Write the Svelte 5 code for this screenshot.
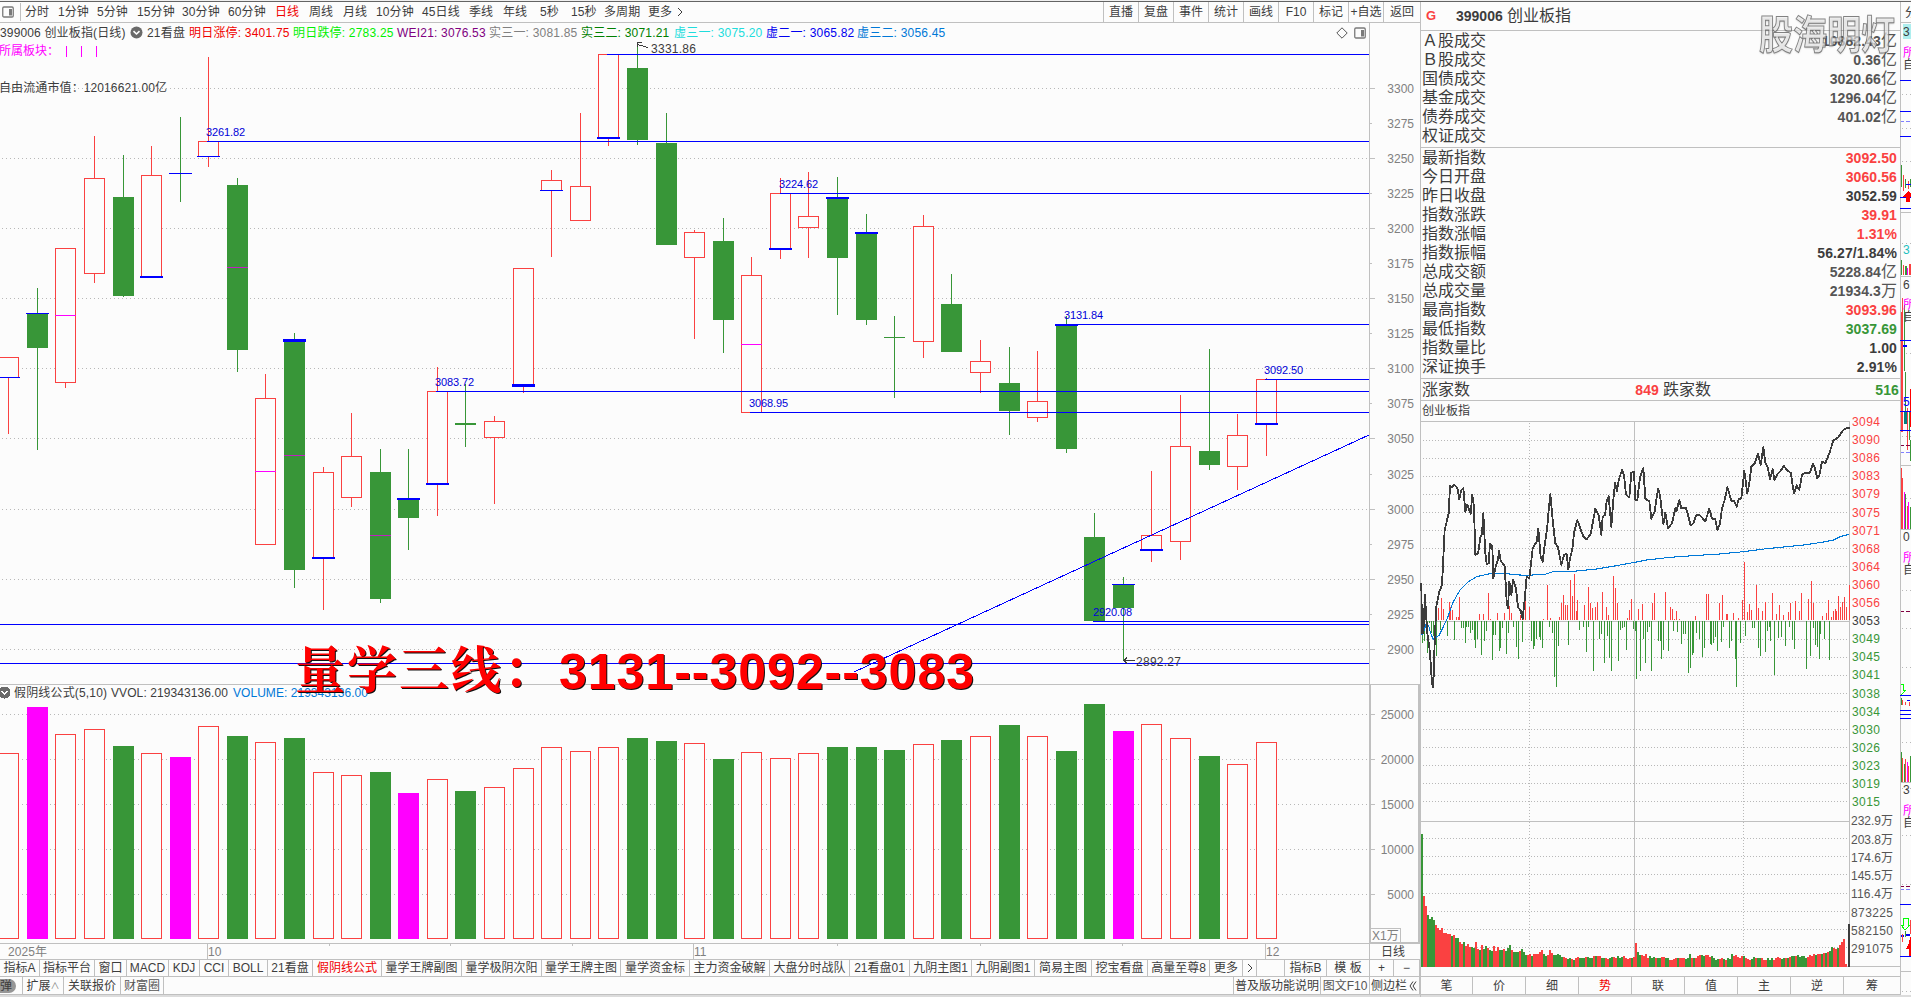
<script>
  const periods = [
    ["分时", 33], ["1分钟", 39], ["5分钟", 40], ["15分钟", 45], ["30分钟", 46], ["60分钟", 47],
    ["日线", 34], ["周线", 34], ["月线", 33], ["10分钟", 46], ["45日线", 47], ["季线", 34],
    ["年线", 37], ["5秒", 31], ["15秒", 33], ["多周期", 44], ["更多", 29]
  ];

  const actions = ["直播", "复盘", "事件", "统计", "画线", "F10", "标记", "+自选", "返回"];

  const indicators = [
    ["明日涨停: 3401.75", "#f00000", 104],
    ["明日跌停: 2783.25", "#00f000", 104],
    ["WEI21: 3076.53", "#800080", 92],
    ["实三一: 3081.85", "#808080", 92],
    ["实三二: 3071.21", "#008000", 93],
    ["虚三一: 3075.20", "#20dcdc", 92],
    ["虚二一: 3065.82", "#0000f0", 91],
    ["虚三二: 3056.45", "#0078d7", 92]
  ];

  // kind, high, top, bottom, low, volume top, mark y, mark height, magenta y
  const rawCandles = [
    ["r", 357, 357, 377, 434, 753, 377, 1],
    ["g", 288, 313, 348, 450, 707, 313, 1],
    ["r", 248, 248, 382, 388, 734, 0, 0, 315],
    ["r", 136, 178, 273, 283, 729],
    ["g", 155, 197, 296, 297, 746],
    ["r", 146, 175, 277, 277, 753, 276, 2],
    ["g", 117, 173, 174, 202, 757, 173, 1],
    ["r", 57, 141, 156, 167, 726, 156, 1],
    ["g", 178, 185, 350, 372, 736, 0, 0, 267],
    ["r", 374, 398, 544, 544, 742, 0, 0, 471],
    ["g", 333, 341, 570, 588, 738, 339, 3, 455],
    ["r", 467, 472, 558, 610, 772, 557, 2],
    ["r", 413, 456, 497, 507, 775],
    ["g", 449, 472, 599, 603, 772, 0, 0, 535],
    ["g", 449, 499, 518, 550, 793, 498, 2],
    ["r", 367, 391, 484, 516, 779, 483, 2],
    ["g", 384, 423, 425, 447, 791],
    ["r", 416, 421, 437, 504, 787],
    ["r", 268, 268, 385, 393, 768, 384, 3],
    ["r", 170, 180, 190, 257, 747, 190, 1],
    ["r", 113, 186, 220, 220, 751],
    ["r", 54, 54, 138, 146, 747, 137, 2],
    ["g", 43, 68, 140, 145, 738],
    ["g", 113, 143, 245, 245, 741],
    ["r", 230, 232, 257, 339, 743],
    ["g", 218, 241, 320, 353, 759],
    ["r", 257, 275, 412, 412, 752, 0, 0, 344],
    ["r", 178, 193, 249, 259, 758, 248, 2],
    ["r", 172, 216, 227, 258, 753],
    ["g", 177, 198, 258, 315, 747, 197, 2],
    ["g", 214, 233, 320, 325, 747, 232, 2],
    ["g", 316, 337, 338, 398, 750],
    ["r", 215, 226, 341, 358, 744],
    ["g", 274, 304, 352, 352, 740],
    ["r", 340, 361, 372, 393, 736],
    ["g", 347, 383, 411, 435, 725],
    ["r", 351, 401, 417, 422, 736],
    ["g", 316, 325, 449, 453, 751, 324, 2],
    ["g", 513, 537, 621, 621, 704],
    ["g", 577, 584, 608, 661, 731, 584, 1],
    ["r", 471, 535, 550, 562, 724, 549, 2],
    ["r", 395, 446, 541, 560, 738],
    ["g", 349, 451, 465, 470, 756],
    ["r", 414, 435, 466, 490, 764],
    ["r", 378, 379, 424, 456, 742, 423, 2]
  ];
  const magentaVolumes = [1, 6, 14, 39];

  const candles = rawCandles.map(([kind, high, top, bottom, low, vol, markY, markH, mid], i) => ({
    kind, high, top, bottom, low, vol, markY, markH, mid,
    x: Math.round(8.2 + 28.58 * i),
    volKind: magentaVolumes.includes(i) ? "m" : kind
  }));

  const levels = [
    [607, 54], [207, 141], [780, 193], [1066, 324], [1265, 379],
    [436, 391], [750, 412], [1093, 621], [0, 624], [0, 663]
  ];
  const levelLabels = [
    [206, 136, "3261.82"], [779, 188, "3224.62"], [1064, 319, "3131.84"], [1264, 374, "3092.50"],
    [435, 386, "3083.72"], [749, 407, "3068.95"], [1093, 616, "2920.08"]
  ];
  const priceTicks = [88, 123, 158, 193, 228, 263, 298, 333, 368, 403, 438, 474, 509, 544, 579, 614, 649]
    .map((y, i) => ({ y, value: 3300 - i * 25, major: i % 2 === 0 }));
  const volumeTicks = [25000, 20000, 15000, 10000, 5000].map((value, i) => ({ value, y: 714 + i * 45 }));

  const tabs = [
    ["指标A", 40], ["指标平台", 55], ["窗口", 32], ["MACD", 42], ["KDJ", 31], ["CCI", 29], ["BOLL", 39],
    ["21看盘", 45], ["假阴线公式", 69], ["量学王牌副图", 80], ["量学极阴次阳", 80], ["量学王牌主图", 79],
    ["量学资金标", 69], ["主力资金破解", 80], ["大盘分时战队", 80], ["21看盘01", 60], ["九阴主图1", 62],
    ["九阴副图1", 63], ["简易主图", 57], ["挖宝看盘", 56], ["高量至尊8", 62], ["更多", 33], ["next", 14],
    ["", 28], ["指标B", 42], ["模 板", 43], ["+", 24], ["−", 26]
  ];

  const turnover = [
    ["Ａ股成交", "10882.43", "亿"], ["Ｂ股成交", "0.36", "亿"], ["国债成交", "3020.66", "亿"],
    ["基金成交", "1296.04", "亿"], ["债券成交", "401.02", "亿"], ["权证成交", "", ""]
  ];
  const quotes = [
    ["最新指数", "3092.50", "", "up"], ["今日开盘", "3060.56", "", "up"], ["昨日收盘", "3052.59", "", ""],
    ["指数涨跌", "39.91", "", "up"], ["指数涨幅", "1.31%", "", "up"], ["指数振幅", "56.27/1.84%", "", ""],
    ["总成交额", "5228.84", "亿", "soft"], ["总成交量", "21934.3", "万", "soft"], ["最高指数", "3093.96", "", "up"],
    ["最低指数", "3037.69", "", "down"], ["指数量比", "1.00", "", ""], ["深证换手", "2.91%", "", ""]
  ];

  const minuteLabels = [
    3094, 3090, 3086, 3083, 3079, 3075, 3071, 3068, 3064, 3060, 3056, 3053,
    3049, 3045, 3041, 3038, 3034, 3030, 3026, 3023, 3019, 3015
  ];
  const minuteVolLabels = ["232.9万", "203.8万", "174.6万", "145.5万", "116.4万", "873225", "582150", "291075"];
  const sideTabs = ["笔", "价", "细", "势", "联", "值", "主", "逆", "筹"];

  // minute data is kept at three units per pixel
  const pricePath = "34,548 36,700 40,700 45,585 48,640 52,700 58,740 62,790 66,850 70,862 72,790 75,700 79,620 88,575 96,555 104,390 116,340 120,258 126,262 132,254 142,264 148,298 154,270 160,264 166,336 172,314 182,342 187,284 192,322 196,465 204,460 208,435 212,408 216,402 220,340 226,460 230,492 236,490 240,430 247,440 250,535 257,500 264,480 267,452 272,482 284,498 290,605 294,625 298,545 304,585 309,540 318,565 324,622 332,632 338,656 344,600 350,530 358,535 362,500 368,445 380,425 385,386 392,470 398,485 402,450 412,380 416,330 421,282 428,360 436,430 444,442 454,495 462,465 470,462 475,508 480,475 487,448 492,400 502,360 510,382 520,410 530,418 542,402 548,370 556,326 566,345 574,405 578,350 585,345 590,305 596,288 604,380 610,300 615,248 621,275 626,240 636,210 642,225 648,284 658,292 664,218 672,216 676,300 682,300 690,232 700,204 706,296 718,304 724,356 734,335 744,266 750,285 760,372 766,338 774,386 786,370 796,325 800,332 808,300 814,325 828,324 834,345 842,376 850,370 858,346 870,346 886,364 898,326 906,356 916,358 922,390 930,372 936,325 944,300 952,262 964,302 972,302 980,320 986,298 994,295 1003,212 1012,280 1018,250 1024,200 1034,190 1044,160 1052,195 1060,142 1066,188 1074,205 1080,238 1088,208 1093,240 1102,222 1112,212 1122,198 1132,212 1142,218 1152,280 1160,256 1168,270 1176,224 1184,220 1200,218 1209,192 1214,202 1222,235 1228,226 1236,185 1246,190 1258,160 1270,122 1285,112 1300,90 1310,84 1320,84";
  const averagePath = "34,705 40,700 48,672 56,678 62,700 70,718 88,705 100,680 112,655 130,605 150,570 175,545 200,530 235,522 285,520 310,524 350,526 405,523 430,515 490,514 560,507 620,497 680,486 710,480 780,472 850,467 930,462 1000,455 1070,446 1130,440 1190,434 1240,426 1270,420 1290,410 1318,403";

  const buys = [
    45,645, 85,625, 94,595, 99,628, 118,605, 122,620, 127,630, 139,652, 145,652, 148,592, 208,642, 220,642,
    235,580, 241,656, 262,640, 283,640, 298,618, 304,640, 331,645, 340,615, 345,602, 358,620, 400,656, 412,556,
    421,655, 448,650, 454,610, 460,585, 466,615, 472,615, 481,540, 487,588, 493,522, 499,632, 502,600, 523,616,
    535,562, 541,610, 547,625, 556,620, 562,605, 577,576, 589,620, 595,645, 610,528, 616,565, 622,610, 652,654,
    658,630, 664,598, 685,628, 697,612, 727,610, 733,580, 766,575, 781,620, 787,628, 793,656, 799,632, 808,656,
    856,648, 889,582, 895,582, 928,608, 937,586, 949,642, 952,642, 970,640, 985,654, 997,600, 1003,486, 1012,635,
    1018,612, 1024,630, 1039,555, 1045,625, 1057,632, 1066,605, 1087,580, 1099,642, 1108,614, 1120,645, 1135,635,
    1141,608, 1156,602, 1168,632, 1174,580, 1195,598, 1204,544, 1210,608, 1237,648, 1249,640, 1255,600, 1264,652,
    1270,632, 1276,628, 1279,634, 1285,588, 1291,620, 1297,605, 1303,592, 1309,620, 1317,555
  ];
  const sells = [
    37,728, 43,722, 52,758, 58,670, 64,700, 70,708, 79,768, 91,690, 112,707, 133,720, 154,685, 160,685, 166,728,
    169,680, 175,682, 181,698, 187,690, 193,720, 196,745, 202,718, 214,764, 223,722, 229,692, 247,780, 250,705,
    256,704, 268,752, 271,745, 277,685, 289,762, 295,700, 310,682, 319,740, 325,778, 337,725, 364,722, 370,748,
    373,738, 379,718, 388,712, 391,720, 397,745, 418,680, 427,700, 433,830, 439,860, 445,738, 475,735, 508,690,
    520,680, 529,755, 535,682, 550,812, 568,718, 574,702, 583,788, 592,708, 598,774, 604,812, 625,782, 631,690,
    637,685, 643,680, 649,750, 670,688, 676,692, 679,838, 691,812, 700,718, 706,788, 712,695, 718,680, 724,812,
    745,724, 751,722, 754,776, 760,750, 775,752, 790,694, 802,696, 814,732, 820,702, 826,702, 835,820, 841,804,
    847,766, 850,758, 859,700, 868,718, 877,772, 883,744, 901,732, 904,736, 910,730, 916,712, 922,752, 934,726,
    940,680, 958,745, 964,724, 976,778, 979,860, 991,728, 1006,708, 1027,684, 1033,684, 1045,744, 1051,768,
    1066,755, 1072,692, 1078,682, 1081,724, 1093,824, 1105,715, 1114,710, 1126,738, 1138,680, 1147,720, 1153,748,
    1189,808, 1201,768, 1210,685, 1216,735, 1222,740, 1228,776, 1231,702, 1243,716, 1258,780
  ];
  // bar heights from the open on; colours run in parallel
  const minuteVol = [
    400, 212, 182, 155, 143, 149, 140, 125, 118, 112, 116, 102, 101, 98, 98, 92, 95, 86, 86, 76, 70, 74, 64, 68, 60, 60, 58,
    74, 55, 50, 65, 54, 62, 56, 50, 47, 62, 47, 60, 50, 50, 55, 48, 58, 65, 52, 44, 44, 44, 48, 53, 44, 35, 35, 38, 34, 38,
    38, 38, 44, 50, 38, 32, 35, 50, 42, 35, 36, 40, 36, 30, 30, 28, 24, 27, 24, 22, 26, 30, 26, 27, 27, 30, 30, 28, 28, 33,
    33, 32, 33, 27, 27, 26, 24, 26, 30, 30, 27, 32, 28, 30, 33, 28, 25, 28, 28, 30, 72, 45, 36, 36, 34, 38, 27, 32, 26, 30,
    27, 26, 26, 30, 30, 26, 27, 22, 20, 24, 26, 26, 27, 26, 26, 24, 28, 40, 28, 27, 26, 32, 35, 36, 33, 35, 36, 30, 34, 26,
    22, 24, 24, 26, 24, 22, 26, 24, 38, 32, 35, 30, 28, 34, 32, 26, 24, 22, 25, 30, 27, 27, 26, 26, 22, 20, 26, 22, 27, 22,
    26, 30, 26, 24, 26, 27, 27, 30, 33, 33, 32, 35, 30, 32, 32, 27, 30, 35, 32, 38, 36, 38, 40, 38, 42, 42, 45, 48, 60, 58,
    55, 58, 66, 75, 84, 8
  ];
  const minuteVolKinds =
    "grrgggg" + "rrrrrrrrgrggrrgrrrggrrgrggrgg" + "rrrggrgggrgggrgggrrgrrrrrggrrrgggggrrggrgrrgggrgggrgrrgg" +
    "rrggrrgggrrrrgrrggrrrrgg" + "grggrrggrrrrgrrrgggrgrrrggrrrggggrrgrgggrrrrrgrrrggrggrrrgggrrrrggrgrggrgggggrrrrgrrgrgrggrrgrrrrrrrgrrr";

  function pairs(flat) {
    const out = [];
    for (let i = 0; i < flat.length; i += 2) out.push([flat[i], flat[i + 1]]);
    return out;
  }

  function steps(from, to, step) {
    const out = [];
    for (let v = from; v < to; v += step) out.push(Math.round(v));
    return out;
  }

  const minuteGrid = [...steps(440, 620, 18.04), ...steps(639, 815, 18.04), ...steps(838, 960, 18.2)];

  const stripLevels = [80, 111, 136, 197, 208, 340, 411, 430, 695, 710, 714, 718, 904, 956];
  const stripDots = [94, 128, 161, 243, 353, 436, 498, 590, 628, 667, 742, 788, 835, 884, 991];
  const stripRules = [212, 276, 465, 529, 782, 971];
  const stripBlocks = [
    [0, 165, 1, 22, "g"], [2, 175, 1, 16, "r"], [4, 179, 1, 9, "g"], [7, 181, 1, 8, "r"], [9, 179, 2, 8, "g"], [5, 184, 5, 1, "b"],
    [0, 260, 1, 15, "g"], [2, 265, 1, 10, "r"], [4, 266, 2, 9, "g"], [6, 268, 1, 7, "m"], [8, 264, 2, 11, "r"],
    [1, 298, 1, 84, "r"], [0, 312, 2, 120, "r"], [3, 305, 1, 66, "g"], [2, 345, 4, 2, "b"], [4, 372, 1, 50, "g"],
    [3, 412, 4, 12, "t"], [6, 408, 1, 42, "r"], [8, 412, 1, 28, "g"], [9, 389, 2, 38, "x"], [7, 430, 3, 1, "b"], [9, 440, 1, 21, "g"],
    [0, 468, 1, 61, "r"], [1, 478, 1, 51, "r"], [3, 492, 1, 37, "m"], [4, 494, 1, 35, "g"], [6, 506, 1, 23, "r"], [7, 502, 1, 27, "m"], [9, 507, 2, 22, "g"],
    [0, 698, 1, 7, "g"], [1, 700, 1, 5, "r"], [4, 702, 1, 3, "r"], [6, 700, 3, 1, "b"], [8, 702, 1, 4, "r"], [10, 699, 1, 6, "g"],
    [0, 752, 1, 30, "g"], [1, 758, 1, 24, "r"], [3, 764, 1, 18, "g"], [4, 759, 1, 23, "r"], [6, 762, 1, 20, "m"], [7, 766, 1, 16, "r"], [9, 756, 2, 26, "g"],
    [0, 935, 3, 2, "b"], [1, 934, 1, 8, "r"], [4, 931, 1, 6, "g"], [5, 934, 4, 2, "b"], [9, 920, 2, 14, "r"]
  ];
  const stripText = [
    [2, 36, "3", "#3c3c3c"], [2, 254, "3", "#20c0c0"], [2, 289, "6", "#3c3c3c"], [2, 406, "5", "#0000ff"],
    [2, 541, "0", "#3c3c3c"], [2, 794, "3", "#3c3c3c"],
    [2, 57, "所", "#ff00ff"], [2, 309, "所", "#ff00ff"], [2, 562, "所", "#ff00ff"], [2, 815, "所", "#ff00ff"],
    [2, 69, "自", "#3c3c3c"], [2, 321, "自", "#3c3c3c"], [2, 574, "自", "#3c3c3c"], [2, 827, "自", "#3c3c3c"]
  ];
</script>

{#snippet panelIcon()}
  <svg class="panel-icon" width="12" height="12" viewBox="0 0 12 12">
    <rect x="0.75" y="1" width="10.5" height="10" rx="1.2" fill="none" stroke="#7a7a7a" stroke-width="1.3" />
    <rect x="7" y="3" width="3" height="6.5" fill="#7a7a7a" />
  </svg>
{/snippet}

{#snippet downIcon()}
  <svg class="down-icon" width="13" height="13" viewBox="0 0 13 13">
    <circle cx="6.5" cy="6.5" r="6" fill="#6a6a6a" />
    <path d="M3.5 5.2 6.5 8 9.5 5.2" fill="none" stroke="#fff" stroke-width="1.6" />
  </svg>
{/snippet}

{#snippet chevron()}
  <svg width="6" height="10" viewBox="0 0 6 10"><path d="M1 1 5 5 1 9" fill="none" stroke="#3c3c3c" /></svg>
{/snippet}

<div class="screen">
  <main class="left">
    <nav class="periods">
      <span class="toggle">{@render panelIcon()}</span>
      {#each periods as [label, width]}
        <span class="period" class:active={label === "日线"} style="width: {width}px">{label}</span>
      {/each}
      {@render chevron()}
      <div class="actions">
        {#each actions as label}
          <span class="action">{label}</span>
        {/each}
      </div>
    </nav>

    <div class="info">
      <span class="symbol">399006 创业板指(日线)</span>
      <span class="fold">{@render downIcon()}</span>
      <span class="formula">21看盘</span>
      {#each indicators as [text, color, width]}
        <span class="indicator" style="width: {width}px; color: {color}">{text}</span>
      {/each}
      <span class="info-icons">
        <svg width="12" height="12" viewBox="0 0 12 12"><path d="M6 0.8 11.2 6 6 11.2 0.8 6Z" fill="none" stroke="#555" /></svg>
        {@render panelIcon()}
      </span>
    </div>

    <svg class="chart" width="1420" height="918" viewBox="0 42 1420 918">
      <!-- grid and axes -->
      {#each priceTicks as t}
        {#if t.major}
          <line x1="2" x2="1369" y1={t.y + 0.5} y2={t.y + 0.5} class="dots" />
        {/if}
        <rect x="1370" y={t.y} width={t.major ? 5 : 2} height="1" class="rule" />
        <text x="1414" y={t.y + 5} class="axis">{t.value}</text>
      {/each}
      {#each volumeTicks as t}
        <line x1="2" x2="1369" y1={t.y + 0.5} y2={t.y + 0.5} class="dots" />
        <rect x="1370" y={t.y} width="5" height="1" class="rule" />
        <text x="1414" y={t.y + 5} class="axis">{t.value}</text>
      {/each}
      <rect x="1369" y="42" width="1" height="918" class="rule" />
      <rect x="0" y="684" width="1420" height="1" class="rule" />
      <rect x="0" y="943" width="1420" height="1" class="rule" />
      <rect x="1369" y="684" width="2" height="260" class="rule" />
      <rect x="1418" y="684" width="2" height="260" class="rule" />
      <rect x="1370" y="942" width="50" height="2" class="rule" />
      <path d="M1371 928.5h29.5v14" class="box" />
      <text x="1372" y="940" class="muted">X1万</text>
      <text x="1381" y="956">日线</text>

      <text x="-1" y="55" fill="#ff00ff">所属板块：</text>
      {#each [66, 81, 96] as x}
        <rect {x} y="46" width="1" height="11" fill="#ff00ff" />
      {/each}
      <text x="-1" y="92" textLength="168">自由流通市值：12016621.00亿</text>

      <!-- candles -->
      {#each candles as c}
        {#if c.kind === "r"}
          <rect x={c.x} y={c.high} width="1" height={c.top - c.high} class="r" />
          <rect x={c.x} y={c.bottom} width="1" height={c.low - c.bottom} class="r" />
          <rect x={c.x - 9.5} y={c.top + 0.5} width="20" height={c.bottom - c.top} class="hollow" />
        {:else}
          <rect x={c.x} y={c.high} width="1" height={c.low - c.high} class="g" />
          <rect x={c.x - 10} y={c.top} width="21" height={c.bottom - c.top} class="g" />
        {/if}
        {#if c.mid}
          <rect x={c.x - 10} y={c.mid} width="21" height="1" class="m" class:dim={c.kind === "g"} />
        {/if}
        {#if c.markH}
          <rect x={c.x - 11} y={c.markY} width="23" height={c.markH} class="b" />
        {/if}

        {#if c.volKind === "r"}
          <rect x={c.x - 9.5} y={c.vol + 0.5} width="20" height={938 - c.vol} class="hollow" />
        {:else}
          <rect x={c.x - 10} y={c.vol} width="21" height={939 - c.vol} class={c.volKind} />
        {/if}
      {/each}

      <!-- price levels and trend line -->
      {#each levels as [x, y]}
        <rect {x} {y} width={1369 - x} height="1" class="b" />
      {/each}
      {#each levelLabels as [x, y, text]}
        <text {x} {y} class="level" textLength="39">{text}</text>
      {/each}
      <line x1="854" y1="672" x2="1369" y2="435" class="trend" />
      <path d="M648 47.5 637.5 44.5M637.5 42.5h4M637.5 42v5" class="pointer" />
      <text x="651" y="53" textLength="45">3331.86</text>
      <path d="M1135 660.5h-11M1127 657.5l-3 3 3 3" class="pointer" />
      <text x="1136" y="666" textLength="45">2892.27</text>

      <!-- volume header -->
      <g transform="translate(-2 686)">{@render downIcon()}</g>
      <text x="14" y="697" textLength="93">假阴线公式(5,10)</text>
      <text x="111" y="697" textLength="117">VVOL: 219343136.00</text>
      <text x="233" y="697" textLength="135" fill="#0078d7">VOLUME: 219343136.00</text>

      <!-- dates -->
      {#each [[207, "10"], [693, "11"], [1265, "12"]] as [x, text]}
        <rect {x} y="943" width="1" height="16" class="rule" />
        <text x={x + 1} y="956" class="muted">{text}</text>
      {/each}
      {#each [329, 450, 572, 837, 980, 1122] as x}
        <rect {x} y="943" width="1" height="3" class="rule" />
      {/each}
      <text x="8" y="956" class="muted" textLength="39">2025年</text>

      <g class="headline">
        <text x="295" y="688" class="headline-cjk" textLength="258">量学三线：</text>
        <text x="559" y="689" class="headline-num" textLength="415">3131--3092--3083</text>
      </g>
    </svg>

    <div class="tabs">
      {#each tabs as [label, width]}
        <span class="tab" class:active={label === "假阴线公式"} style="width: {width}px">
          {#if label === "next"}{@render chevron()}{:else}{label}{/if}
        </span>
      {/each}
    </div>
    <div class="tabs status">
      <span class="tab bullet"><i>弹</i></span>
      <span class="tab extend">扩展<small>∧</small></span>
      <span class="tab related">关联报价</span>
      <span class="tab circle">财富圈</span>
      <span class="tab spacer"></span>
      <span class="tab notes">普及版功能说明</span>
      <span class="tab f10">图文F10</span>
      <span class="tab sidebar">侧边栏<svg width="8" height="10" viewBox="0 0 8 10"><path d="M4 0.5 1 5 4 9.5M7 0.5 4 5 7 9.5" fill="none" stroke="#3c3c3c" /></svg></span>
    </div>
  </main>

  <aside class="panel">
    <header class="panel-title">
      <span class="flag">G</span>
      <b>399006</b>
      <span>创业板指</span>
    </header>
    <div class="group turnover">
      {#each turnover as [label, value, unit]}
        <div class="row soft"><span>{label}</span><span class="value"><b>{value}</b>{unit}</span></div>
      {/each}
    </div>
    <div class="group">
      {#each quotes as [label, value, unit, tone]}
        <div class="row {tone}"><span>{label}</span><span class="value"><b>{value}</b>{unit}</span></div>
      {/each}
    </div>
    <div class="breadth">
      <span>涨家数</span><b class="up-count">849</b>
      <span>跌家数</span><b class="down-count">516</b>
    </div>
    <div class="minute-title">创业板指</div>

    <svg class="minute" width="479" height="555" viewBox="1421 421 479 555">
      {#each minuteGrid as y}
        <line x1="1423" x2="1849" y1={y + 0.5} y2={y + 0.5} class="dots tight" />
      {/each}
      {#each [1529, 1743] as x}
        <line x1={x + 0.5} x2={x + 0.5} y1="423" y2="966" class="dots tight" />
      {/each}
      <rect x="1421" y="421" width="429" height="1" class="rule" />
      <rect x="1421" y="621" width="429" height="1" class="rule" />
      <rect x="1421" y="821" width="429" height="1" class="rule" />
      <rect x="1421" y="966" width="479" height="1" class="rule" />
      <rect x="1634" y="421" width="1" height="546" class="rule" />
      <rect x="1849" y="421" width="1" height="546" class="rule" />

      {#each pairs(buys) as [x, top]}
        <rect x={1410 + Math.floor(x / 3)} y={400 + Math.round(top / 3)} width="1" height={220 - Math.round(top / 3)} class="r" />
      {/each}
      {#each pairs(sells) as [x, bottom]}
        <rect x={1410 + Math.floor(x / 3)} y="621" width="1" height={Math.round(bottom / 3) - 221} class="g" />
      {/each}
      <g transform="translate(1410 400) scale(0.33333)">
        <polyline points={averagePath} class="average" />
        <polyline points={pricePath} class="price" />
      </g>

      {#each minuteVol as h, i}
        <rect x={1421 + i * 2} y={967 - Math.round(h / 3)} width="2" height={Math.round(h / 3)} class={minuteVolKinds[i] ?? "r"} />
      {/each}
      <rect x="1848" y="924" width="2" height="43" fill="#3c3c3c" />

      {#each minuteLabels as value, i}
        <text
          x="1852" y={426 + Math.round(i * 18.1)} textLength="28"
          fill={value > 3053 ? "#fa4141" : value < 3053 ? "#389638" : "#3c3c3c"}>{value}</text>
      {/each}
      {#each minuteVolLabels as text, i}
        <text x="1851" y={i === 0 ? 825 : 826 + Math.round(i * 18.1)} textLength="42" class="vol-label">{text}</text>
      {/each}
    </svg>

    <div class="side-tabs">
      {#each sideTabs as label}
        <span class="side-tab" class:active={label === "势"}>{label}</span>
      {/each}
    </div>
    <div class="watermark">股海明灯</div>
  </aside>

  <svg class="strip" width="11" height="997" viewBox="0 0 11 997">
    <rect x="0" y="2" width="1" height="993" class="rule" />
    <rect x="0" y="22" width="11" height="1" class="rule" />
    <rect x="3" y="24" width="8" height="15" fill="#aeeeee" />
    <text x="5" y="17">分</text>
    <g transform="translate(1 0)">
      {#each stripDots as y}
        <line x1="1" x2="10" y1={y + 0.5} y2={y + 0.5} class="dots" />
      {/each}
      {#each stripRules as y}
        <rect x="0" {y} width="10" height="1" class="rule" />
      {/each}
      {#each stripBlocks as [x, y, w, h, kind]}
        <rect {x} {y} width={w} height={h} class={kind} />
      {/each}
      {#each stripText as [x, y, text, color]}
        <text {x} {y} fill={color}>{text}</text>
      {/each}
    </g>
    {#each stripLevels as y}
      <rect x="0" {y} width="11" height="1" class="b" />
    {/each}
    {#each [[121, "#8080ff"], [445, "#800040"], [452, "#8080ff"], [611, "#800040"], [886, "#800040"], [889, "#8080ff"]] as [y, color]}
      <path d="M1 {y + 0.5}h3M6 {y + 0.5}h4" stroke={color} />
    {/each}
    <path d="M8 191 12 195V197H10V202H6V197H3Z" fill="#ff0000" />
    <path d="M10 937 11 937V956H9V949H6L9 943Z" fill="#ff0000" />
    <path d="M1 684h2v6h3L1 695M3 918h5v7h2l-5 5-4-5h2Z" fill="none" stroke="#00ff00" />
  </svg>
</div>

<style>
  :global(body) {
    background: #fcfcfc;
    overflow: hidden;
  }

  .screen {
    display: grid;
    grid-template-columns: 1420px 480px 11px;
    box-sizing: border-box;
    width: 1911px;
    height: 997px;
    overflow: hidden;
    background: #fcfcfc;
    color: #3c3c3c;
    font-family: "Liberation Sans", "Noto Sans CJK SC", sans-serif;
    font-size: 12px;
    line-height: 16px;
    white-space: nowrap;
    box-shadow: inset 0 1px #f0f0f0, inset 0 2px #646464, inset 0 -2px #dcdcdc;
  }

  .left {
    display: flex;
    flex-direction: column;
    padding-top: 2px;
    min-width: 0;
  }

  .periods {
    display: flex;
    align-items: center;
    height: 20px;
    border-bottom: 1px solid #c0c0c0;
  }

  .toggle {
    display: flex;
    align-items: center;
    width: 18px;
    height: 18px;
    padding-left: 2px;
    margin-right: 4px;
    border-right: 1px solid #c0c0c0;
  }

  .period {
    flex: none;
    letter-spacing: 0.1px;
  }

  .period.active,
  .tab.active,
  .side-tab.active {
    color: #f00000;
  }

  .actions {
    display: flex;
    align-self: stretch;
    margin-left: auto;
  }

  .action {
    display: flex;
    align-items: center;
    justify-content: center;
    width: 34px;
    border-left: 1px solid #c0c0c0;
  }

  .action:last-child {
    width: 36px;
  }

  .info {
    display: flex;
    align-items: center;
    height: 19px;
    letter-spacing: 0.2px;
  }

  .symbol {
    width: 130px;
    letter-spacing: 0.15px;
  }

  .fold {
    display: flex;
    width: 17px;
  }

  .formula {
    width: 42px;
  }

  .indicator {
    flex: none;
  }

  .info-icons {
    display: flex;
    align-items: center;
    gap: 6px;
    align-self: stretch;
    margin-left: auto;
    margin-right: 50px;
    padding-right: 3px;
    border-right: 1px solid #c0c0c0;
  }

  svg {
    display: block;
    flex: none;
  }

  .chart,
  .minute,
  .strip {
    shape-rendering: crispEdges;
    overflow: hidden;
  }

  .minute {
    overflow: visible;
  }

  text {
    fill: #3c3c3c;
    font-size: 12px;
  }

  text[fill="#ff00ff"] { fill: #ff00ff; }
  text[fill="#0078d7"] { fill: #0078d7; }
  text[fill="#fa4141"] { fill: #fa4141; }
  text[fill="#389638"] { fill: #389638; }
  text[fill="#0000ff"] { fill: #0000ff; }
  text[fill="#20c0c0"] { fill: #20c0c0; }

  .axis {
    text-anchor: end;
    fill: #808080;
  }

  .muted {
    fill: #808080;
  }

  .vol-label {
    fill: #555;
  }

  .level {
    fill: #0000d8;
    font-size: 11px;
  }

  .dots {
    stroke: #b8b8b8;
    stroke-dasharray: 1 3;
  }

  .dots.tight {
    stroke-dasharray: 1 2;
  }

  .rule { fill: #c0c0c0; }
  .r { fill: #fa4141; }
  .g { fill: #389638; }
  .b { fill: #0000ff; }
  .m { fill: #ff00ff; }
  .t { fill: #008080; }
  .x { fill: #ff0000; }
  .dim { fill: #c020c0; }

  .box {
    fill: none;
    stroke: #c0c0c0;
  }

  .hollow {
    fill: #fcfcfc;
    stroke: #fa4141;
  }

  .trend {
    stroke: #0000ff;
  }

  .pointer {
    fill: none;
    stroke: #3c3c3c;
  }

  .price {
    fill: none;
    stroke: #3c3c3c;
    stroke-width: 5.5;
    stroke-linejoin: round;
  }

  .average {
    fill: none;
    stroke: #0078d7;
    stroke-width: 3.2;
  }

  .headline {
    filter: drop-shadow(1.5px 1.5px 0 #101010);
  }

  .headline text {
    fill: #ff0000;
    font-weight: bold;
  }

  .headline .headline-cjk {
    font-size: 50px;
    font-family: KaiTi, "Noto Serif CJK SC", "Noto Sans CJK SC", serif;
  }

  .headline .headline-num {
    font-size: 50px;
  }

  .tabs {
    display: flex;
    height: 17px;
    border-top: 1px solid #c0c0c0;
    box-sizing: border-box;
    margin-top: -1px;
  }

  .tabs.status {
    height: 19px;
    margin-top: 0;
    border-bottom: 1px solid #c0c0c0;
  }

  .tab {
    display: flex;
    align-items: center;
    justify-content: center;
    flex: none;
    box-sizing: border-box;
    border-right: 1px solid #c0c0c0;
    overflow: hidden;
  }

  .tab.bullet {
    width: 23px;
    justify-content: flex-start;
  }

  .bullet i {
    width: 16px;
    height: 14px;
    line-height: 14px;
    font-style: normal;
    background: #969696;
    border-radius: 0 7px 7px 0;
  }

  .tab.extend { width: 41px; }
  .tab.related { width: 57px; }
  .tab.circle { width: 43px; color: #555; }
  .tab.spacer { flex: 1; }
  .tab.notes { width: 87px; }
  .tab.f10 { width: 49px; color: #555; }
  .tab.sidebar { width: 50px; justify-content: flex-start; padding-left: 1px; gap: 2px; }

  .extend small {
    font-size: 9px;
    color: #808080;
  }

  .panel {
    position: relative;
    display: flex;
    flex-direction: column;
    box-sizing: border-box;
    margin-top: 2px;
    border-left: 1px solid #c0c0c0;
    min-width: 0;
  }

  .panel-title {
    display: flex;
    align-items: center;
    height: 28px;
    border-bottom: 1px solid #c0c0c0;
    font-size: 16px;
  }

  .panel-title .flag {
    width: 30px;
    padding-left: 5px;
    font-size: 13px;
    font-weight: bold;
    color: #fa4141;
  }

  .panel-title b {
    width: 51px;
    font-size: 14px;
  }

  .group {
    padding: 0 3px 2px 1px;
    border-bottom: 1px solid #c0c0c0;
  }

  .turnover {
    height: 114px;
  }

  .row {
    display: flex;
    justify-content: space-between;
    align-items: center;
    height: 19px;
    font-size: 16px;
    line-height: 19px;
  }

  .row b,
  .breadth b {
    font-size: 14px;
    letter-spacing: 0.1px;
  }

  .row.soft .value { color: #555; }
  .row.up .value { color: #fa4141; }
  .row.down .value { color: #389638; }

  .breadth {
    display: flex;
    align-items: center;
    height: 21px;
    border-bottom: 1px solid #c0c0c0;
    padding: 0 1px;
    font-size: 16px;
  }

  .up-count {
    width: 189px;
    margin-right: 4px;
    text-align: right;
    color: #fa4141;
  }

  .down-count {
    margin-left: auto;
    color: #389638;
  }

  .minute-title {
    height: 20px;
    padding-left: 1px;
    line-height: 21px;
  }

  .side-tabs {
    display: flex;
    height: 17px;
    border-top: 1px solid #c0c0c0;
    border-bottom: 1px solid #c0c0c0;
  }

  .side-tab {
    display: flex;
    align-items: center;
    justify-content: center;
    width: 52px;
    border-right: 1px solid #c0c0c0;
  }

  .side-tab:first-child { width: 51px; }
  .side-tab:last-child { flex: 1; border-right: none; }

  .watermark {
    position: absolute;
    right: 5px;
    top: 10px;
    font-size: 40px;
    line-height: 46px;
    font-weight: bold;
    color: rgba(255, 255, 255, 0.6);
    -webkit-text-stroke: 1px rgba(90, 90, 90, 0.75);
    text-shadow: 0 1px 2px rgba(0, 0, 0, 0.25);
    transform: scaleX(0.85);
    transform-origin: right center;
  }
</style>
